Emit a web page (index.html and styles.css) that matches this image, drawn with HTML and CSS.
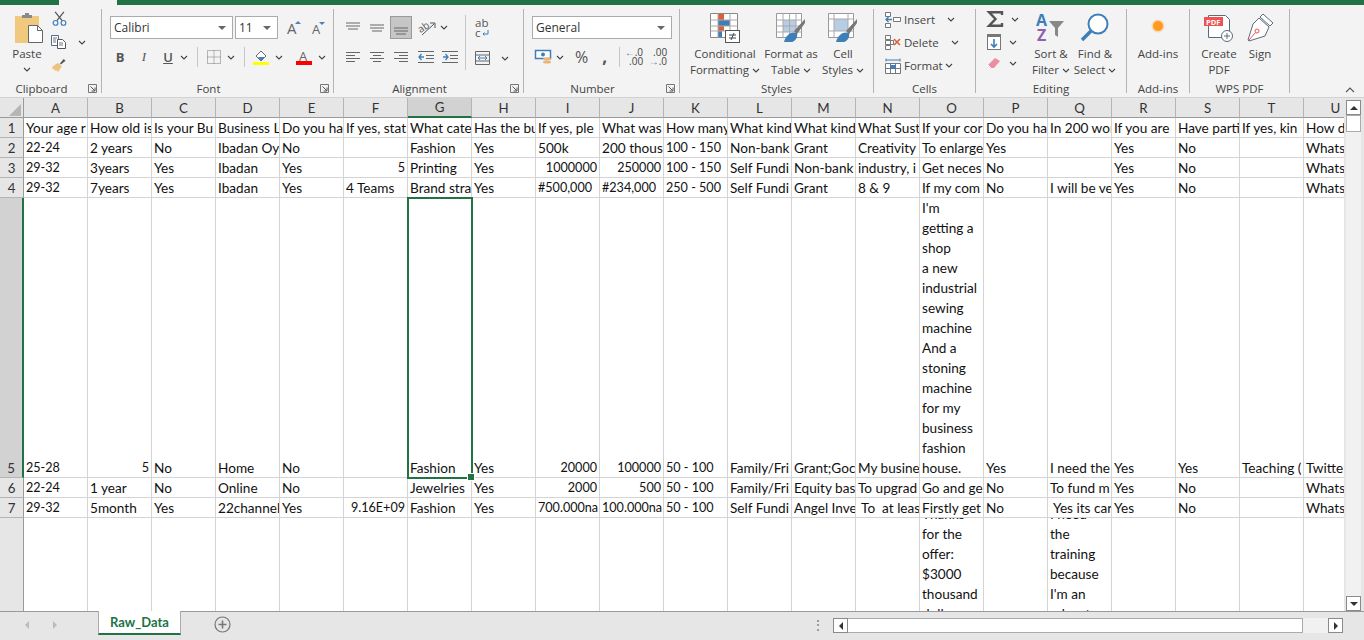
FILE: index.html
```html
<!DOCTYPE html>
<html lang="en">
  <head>
    <meta charset="UTF-8" />
    <title>Raw_Data - Excel</title>
    <link rel="stylesheet" href="styles.css">
  </head>
  <body>
    <svg class="defs" width="0" height="0">
      <symbol id="chev" viewBox="0 0 8 5"><path d="M1 1l3 3 3-3" fill="none" stroke="#444" stroke-width="1.1"/></symbol>
      <symbol id="launch" viewBox="0 0 9 9"><path d="M.5 8.5v-8h8v8z" fill="none" stroke="#777"/><path d="M2.5 2.5l4 4M7 3.5V7H3.5" fill="none" stroke="#555"/></symbol>
      <symbol id="top" viewBox="0 0 14 14"><path d="M0 2h14M0 5h14M2 8h10" stroke="#666" fill="none"/></symbol>
      <symbol id="mid" viewBox="0 0 14 14"><path d="M0 4h14M0 7h14M2 10h10" stroke="#666" fill="none"/></symbol>
      <symbol id="bot" viewBox="0 0 14 14"><path d="M0 7h14M0 10h14M2 13h10" stroke="#666" fill="none"/></symbol>
      <symbol id="left" viewBox="0 0 14 12"><path d="M0 1.5h14M0 4.5h9M0 7.5h14M0 10.5h9" stroke="#666" fill="none"/></symbol>
      <symbol id="center" viewBox="0 0 14 12"><path d="M0 1.5h14M3 4.5h8M0 7.5h14M3 10.5h8" stroke="#666" fill="none"/></symbol>
      <symbol id="right" viewBox="0 0 14 12"><path d="M0 1.5h14M5 4.5h9M0 7.5h14M5 10.5h9" stroke="#666" fill="none"/></symbol>
    </svg>

    <div class="titlebar"><span class="titlebar-tab"></span></div>

    <!-- Ribbon -->
    <div class="ribbon">
      <section class="group g-clipboard">
        <div class="body">
          <div class="big paste">
            <svg width="30" height="30" viewBox="0 0 30 30"><rect x="1" y="3" width="24" height="27" fill="#f0c97e"/><path d="M8 5V2h3V0h4v2h3v3z" fill="#8a8a8a"/><path d="M14.500 12.500h9l5 5v12h-14z" fill="#fff" stroke="#666"/><path d="M23.500 12.500v5h5" fill="none" stroke="#666"/></svg>
            <span class="paste-label">Paste</span>
            <svg class="chev paste-chev"><use href="#chev"/></svg>
          </div>
          <div class="clip-tools">
            <svg width="15" height="15" viewBox="0 0 16 17"><path d="M3 1l8 10M13 1L5 11" stroke="#555" stroke-width="1.400"/><circle cx="3.500" cy="13.500" r="2.700" fill="none" stroke="#3f7fb8" stroke-width="1.300"/><circle cx="12.500" cy="13.500" r="2.700" fill="none" stroke="#3f7fb8" stroke-width="1.300"/></svg>
            <span class="copy-row">
              <svg width="16" height="14" viewBox="0 0 16 14"><path d="M.5.500h7v10h-7z" fill="#fff" stroke="#4d6f91"/><path d="M6.500 4.500h5l3 3v6h-8z" fill="#fff" stroke="#555"/><path d="M2 3h4M2 5h3M2 7h3M8 8h4M8 10h4" stroke="#777"/></svg>
              <svg class="chev copy-chev"><use href="#chev"/></svg>
            </span>
            <svg width="16" height="14" viewBox="0 0 16 15"><path d="M9 6l4-5 2 2-5 4z" fill="#555"/><path d="M1 9l6-4 4 4-4 6-2-2-1 1-1-2-2 0z" fill="#ecc27c"/></svg>
          </div>
        </div>
        <div class="label with-launch">Clipboard<svg class="launch"><use href="#launch"/></svg></div>
      </section>

      <section class="group g-font">
        <div class="stack">
          <div class="row row-a">
            <span class="combo font-name">Calibri<i class="caret"></i></span>
            <span class="combo font-size">11<i class="caret"></i></span>
            <svg class="grow" width="14" height="15" viewBox="0 0 14 15"><text x="0" y="14" class="ico-a">A</text><path d="M8 4l3-3 3 3z" fill="#4a80b8"/></svg>
            <svg class="shrink" width="13" height="14" viewBox="0 0 13 14"><text x="0" y="13" class="ico-a small">A</text><path d="M7 1h6l-3 3z" fill="#4a80b8"/></svg>
          </div>
          <div class="row row-b font-tools">
            <b class="glyph g-b">B</b>
            <i class="glyph g-i">I</i>
            <u class="glyph g-u">U</u>
            <svg class="chev"><use href="#chev"/></svg>
            <span class="vsep sep-a"></span>
            <svg class="border-ico" width="14" height="14" viewBox="0 0 14 14"><path d="M.5.500h13v13H.5zM7 .5v13M.5 7h13" fill="none" stroke="#777" stroke-dasharray="1 1"/></svg>
            <svg class="chev"><use href="#chev"/></svg>
            <span class="vsep sep-b"></span>
            <svg class="fill-ico" width="16" height="16" viewBox="0 0 16 16"><path d="M3 7l5-5 5 5-5 5z" fill="#fff" stroke="#666"/><path d="M5 8h7l-4 4z" fill="#4a80b8"/><rect y="13" width="16" height="3" fill="#ff0"/></svg>
            <svg class="chev"><use href="#chev"/></svg>
            <svg class="color-ico" width="16" height="16" viewBox="0 0 16 16"><text x="3" y="12" class="ico-a small">A</text><rect y="12" width="16" height="4" fill="#f00"/></svg>
            <svg class="chev"><use href="#chev"/></svg>
          </div>
        </div>
        <div class="label with-launch">Font<svg class="launch"><use href="#launch"/></svg></div>
      </section>

      <section class="group g-align">
        <div class="align-wrap">
          <div class="stack">
            <div class="row row-a">
              <svg class="a-ico" width="14" height="14"><use href="#top"/></svg>
              <svg class="a-ico" width="14" height="14"><use href="#mid"/></svg>
              <span class="on"><svg width="14" height="14"><use href="#bot"/></svg></span>
              <svg class="orient" width="18" height="16" viewBox="0 0 18 16"><text x="0" y="11" class="ico-ab" transform="rotate(-35 5 8)">ab</text><path d="M4 15L16 4M12 3h5v5" fill="none" stroke="#555"/></svg>
              <svg class="chev"><use href="#chev"/></svg>
            </div>
            <div class="row row-b">
              <svg class="a-ico" width="14" height="12"><use href="#left"/></svg>
              <svg class="a-ico" width="14" height="12"><use href="#center"/></svg>
              <svg class="a-ico" width="14" height="12"><use href="#right"/></svg>
              <svg class="a-ind" width="16" height="12" viewBox="0 0 16 12"><path d="M0 .5h16M8 4.500h8M8 7.500h8M0 11.500h16" stroke="#666"/><path d="M6 6H1M3.500 3L1 6l2.500 3" fill="none" stroke="#3f7fb8" stroke-width="1.300"/></svg>
              <svg class="a-ind2" width="16" height="12" viewBox="0 0 16 12"><path d="M0 .5h16M8 4.500h8M8 7.500h8M0 11.500h16" stroke="#666"/><path d="M1 6h5M3.500 3L6 6 3.500 9" fill="none" stroke="#3f7fb8" stroke-width="1.300"/></svg>
            </div>
          </div>
          <span class="vsep sep-c"></span>
          <div class="stack wrap-col">
            <svg class="wrap-ico" width="14" height="19" viewBox="0 0 14 19"><text x="0" y="8" class="ico-wrap">ab</text><text x="0" y="18" class="ico-wrap">c</text><path d="M13 11v4H8M9.500 13.500L8 15l1.500 1.500" fill="none" stroke="#3f7fb8"/></svg>
            <span class="merge-row">
              <svg width="15" height="14" viewBox="0 0 15 14"><path d="M.5.500h14v13H.5zM.5 4h14M.5 10h14" fill="none" stroke="#666"/><path d="M3 7h9M5 5L3 7l2 2M10 5l2 2-2 2" fill="none" stroke="#3f7fb8"/></svg>
              <svg class="chev"><use href="#chev"/></svg>
            </span>
          </div>
        </div>
        <div class="label with-launch">Alignment<svg class="launch"><use href="#launch"/></svg></div>
      </section>

      <section class="group g-number">
        <div class="stack">
          <div class="row row-a"><span class="combo num-format">General<i class="caret"></i></span></div>
          <div class="row row-b num-tools">
            <svg class="cur-ico" width="17" height="16" viewBox="0 0 17 16"><rect x=".5" y="1.500" width="15" height="8" fill="#fff" stroke="#3f7fb8" stroke-width="1.500"/><circle cx="8" cy="5.500" r="2" fill="#3f7fb8"/><ellipse cx="12" cy="10" rx="4" ry="1.500" fill="#eab676"/><ellipse cx="12" cy="13" rx="4" ry="1.500" fill="#eab676"/></svg>
            <svg class="chev"><use href="#chev"/></svg>
            <span class="pct">%</span>
            <span class="comma">,</span>
            <span class="vsep sep-d"></span>
            <span class="dec"><span><em>&#8592;</em>.0</span><span>.00</span></span>
            <span class="dec dec2"><span>.00</span><span><em>&#8594;</em>.0</span></span>
          </div>
        </div>
        <div class="label with-launch">Number<svg class="launch"><use href="#launch"/></svg></div>
      </section>

      <section class="group g-styles">
        <div class="body">
          <div class="big w-cf">
            <svg width="30" height="30" viewBox="0 0 30 30"><path d="M.5.500h27v24H.5z" fill="#fff" stroke="#888"/><path d="M8 1h6v6H8z" fill="#d9603b"/><path d="M8 7h12v6H8z" fill="#3f7fb8"/><path d="M8 13h6v5H8z" fill="#d9603b"/><path d="M8 18h4v6H8z" fill="#3f7fb8"/><path d="M.5 7h27M.5 13h27M.5 18h27M8 .5v24M20 .5v24" stroke="#aaa" fill="none"/><rect x="15.500" y="17.500" width="14" height="12" fill="#fff" stroke="#555"/><path d="M19 22h7M19 25h7M24 20l-3 7" stroke="#444" fill="none"/></svg>
            <span>Conditional</span>
            <span>Formatting <svg class="chev"><use href="#chev"/></svg></span>
          </div>
          <div class="big w-ft">
            <svg width="30" height="30" viewBox="0 0 30 30"><path d="M.5.500h25v24H.5z" fill="#fff" stroke="#999"/><path d="M7 7h13v12H7z" fill="#b8cce4"/><path d="M.5 7h25M.5 13h25M.5 19h25M7 .5v24M13.500 .5v24M20 .5v24" stroke="#aaa" fill="none"/><path d="M18 18L29 6v4L21 21z" fill="#777"/><path d="M8 29c2-8 8-11 13-9 1 3-1 8-5 9z" fill="#3f7fb8"/></svg>
            <span>Format as</span>
            <span>Table <svg class="chev"><use href="#chev"/></svg></span>
          </div>
          <div class="big w-cs">
            <svg width="30" height="30" viewBox="0 0 30 30"><path d="M.5.500h25v24H.5z" fill="#fff" stroke="#999"/><path d="M6 6h14v12H6z" fill="#b8cce4"/><path d="M.5 6h25M6 .5v24M20 .5v24M.5 18h25" stroke="#aaa" fill="none"/><path d="M18 18L29 6v4L21 21z" fill="#777"/><path d="M8 29c2-8 8-11 13-9 1 3-1 8-5 9z" fill="#3f7fb8"/></svg>
            <span>Cell</span>
            <span>Styles <svg class="chev"><use href="#chev"/></svg></span>
          </div>
        </div>
        <div class="label">Styles</div>
      </section>

      <section class="group g-cells">
        <div class="cell-tools">
          <div class="tool-row">
            <svg width="16" height="16" viewBox="0 0 16 16"><path d="M.5 .5h5v4h-5zM.5 11.500h5v4h-5zM8.500 5.500h7v4h-7z" fill="#fff" stroke="#777"/><path d="M7 7.500H1M3.500 5L1 7.500 3.500 10" fill="none" stroke="#3f7fb8" stroke-width="1.300"/></svg>
            <span>Insert</span><svg class="chev c-ins"><use href="#chev"/></svg>
          </div>
          <div class="tool-row">
            <svg width="16" height="16" viewBox="0 0 16 16"><path d="M.5 .5h5v4h-5zM.5 5.500h5v4h-5zM.5 10.500h5v4h-5zM5.500 5.500h3v4h-3z" fill="#fff" stroke="#777"/><path d="M9 4l6 6M15 4l-6 6" stroke="#d9603b" stroke-width="1.600"/></svg>
            <span>Delete</span><svg class="chev c-del"><use href="#chev"/></svg>
          </div>
          <div class="tool-row">
            <svg width="16" height="16" viewBox="0 0 16 16"><path d="M.5 5.500h15v10H.5zM5.500 5.500v10M10.500 5.500v10M.5 10.500h15" fill="#fff" stroke="#777"/><path d="M5 7h6v4H5z" fill="#3f7fb8"/><path d="M1 2h14M1 .5v3M15 .5v3" stroke="#3f7fb8"/></svg>
            <span>Format</span><svg class="chev c-fmt"><use href="#chev"/></svg>
          </div>
        </div>
        <div class="label">Cells</div>
      </section>

      <section class="group g-editing">
        <div class="body">
          <div class="edit-col">
            <span class="edit-row">
              <svg width="16" height="16" viewBox="0 0 16 16"><path d="M15 4V1.200H2l6.500 6.800L2 14.800h13V12" fill="none" stroke="#555" stroke-width="2.400"/></svg>
              <svg class="chev"><use href="#chev"/></svg>
            </span>
            <span class="edit-row">
              <svg width="14" height="16" viewBox="0 0 14 16"><rect x=".5" y=".5" width="13" height="15" fill="#fff" stroke="#777"/><rect width="14" height="3" fill="#777"/><path d="M7 5v8M4 10l3 3 3-3" fill="none" stroke="#3f7fb8" stroke-width="1.600"/></svg>
              <svg class="chev"><use href="#chev"/></svg>
            </span>
            <span class="edit-row">
              <svg width="14" height="13" viewBox="0 0 14 13"><path d="M1 8l7-7 5 3-6 7H3z" fill="#eb8ea0"/><path d="M1 8l3 3" stroke="#fff"/></svg>
              <svg class="chev"><use href="#chev"/></svg>
            </span>
          </div>
          <div class="big w-sort">
            <svg width="30" height="30" viewBox="0 0 30 30"><text x="0" y="13" class="ico-az az-a">A</text><text x="1" y="28" class="ico-az az-z">Z</text><path d="M13 8h15l-6 7v9l-3-2v-7z" fill="#888"/></svg>
            <span>Sort &amp;</span>
            <span>Filter <svg class="chev"><use href="#chev"/></svg></span>
          </div>
          <div class="big w-find">
            <svg width="30" height="30" viewBox="0 0 30 30"><circle cx="18" cy="11" r="9.500" fill="#fff" stroke="#3f7fb8" stroke-width="2"/><path d="M11 18L2 27" stroke="#3f7fb8" stroke-width="3.500"/></svg>
            <span>Find &amp;</span>
            <span>Select <svg class="chev"><use href="#chev"/></svg></span>
          </div>
        </div>
        <div class="label">Editing</div>
      </section>

      <section class="group g-addins">
        <div class="body">
          <div class="big w-add">
            <svg width="30" height="30" viewBox="0 0 30 30"><circle cx="15" cy="13" r="5" fill="#ff9a1f"/><circle cx="15" cy="13" r="6.500" fill="#ff9a1f" opacity=".3"/></svg>
            <span>Add-ins</span>
          </div>
        </div>
        <div class="label">Add-ins</div>
      </section>

      <section class="group g-wps">
        <div class="body">
          <div class="big w-pdf">
            <svg width="30" height="30" viewBox="0 0 30 30"><path d="M4.500 2.500h17l4 4v18h-21z" fill="#fff" stroke="#5b6b7d"/><rect y="4" width="19" height="9" fill="#ee5253"/><text x="2" y="12" class="ico-pdf">PDF</text><circle cx="23" cy="23" r="5.500" fill="#fff" stroke="#5b6b7d"/><path d="M20 23h6M23 20v6" stroke="#5b6b7d"/></svg>
            <span>Create</span>
            <span>PDF</span>
          </div>
          <div class="big w-sign">
            <svg width="30" height="30" viewBox="0 0 30 30"><path d="M18 1l10 9-3 3-10-9z" fill="#fff" stroke="#5b6b7d"/><path d="M14 5l10 9-4 9-16 5-1-1 5-16z" fill="#fff" stroke="#5b6b7d"/><circle cx="12" cy="18" r="2" fill="none" stroke="#ee5253"/><path d="M10.500 19.500L4 27" stroke="#ee5253"/></svg>
            <span>Sign</span>
          </div>
        </div>
        <div class="label">WPS PDF</div>
      </section>

      <svg class="collapse" width="10" height="6" viewBox="0 0 10 6"><path d="M1 5l4-4 4 4" fill="none" stroke="#555" stroke-width="1.100"/></svg>
    </div>

    <!-- Sheet -->
    <div class="sheet">
      <div class="grid">
        <table>
          <thead>
            <tr>
              <th class="corner"><svg width="12" height="12" viewBox="0 0 12 12"><path d="M12 0v12H0z" fill="#b5b5b5"/></svg></th>
              <th>A</th><th>B</th><th>C</th><th>D</th><th>E</th><th>F</th><th class="active">G</th><th>H</th><th>I</th><th>J</th><th>K</th><th>L</th><th>M</th><th>N</th><th>O</th><th>P</th><th>Q</th><th>R</th><th>S</th><th>T</th><th>U</th>
            </tr>
          </thead>
          <tbody>
            <tr>
              <th>1</th><td>Your age r</td><td>How old is</td><td>Is your Bu</td><td>Business L</td><td>Do you ha</td><td>If yes, stat</td><td>What cate</td><td>Has the bu</td><td>If yes, ple</td><td>What was</td><td>How many</td><td>What kind</td><td>What kind</td><td>What Sust</td><td>If your cor</td><td>Do you ha</td><td>In 200 wor</td><td>If you are</td><td>Have parti</td><td>If yes, kin</td><td>How d</td>
            </tr>
            <tr>
              <th>2</th><td class="n">22-24</td><td>2 years</td><td>No</td><td>Ibadan Oy</td><td>No</td><td></td><td>Fashion</td><td>Yes</td><td>500k</td><td>200 thous</td><td class="n">100 - 150</td><td>Non-bank</td><td>Grant</td><td>Creativity</td><td>To enlarge</td><td>Yes</td><td></td><td>Yes</td><td>No</td><td></td><td>Whats</td>
            </tr>
            <tr>
              <th>3</th><td class="n">29-32</td><td>3years</td><td>Yes</td><td>Ibadan</td><td>Yes</td><td class="r n">5</td><td>Printing</td><td>Yes</td><td class="r n">1000000</td><td class="r n">250000</td><td class="n">100 - 150</td><td>Self Fundi</td><td>Non-bank</td><td>industry, i</td><td>Get neces</td><td>No</td><td></td><td>Yes</td><td>No</td><td></td><td>Whats</td>
            </tr>
            <tr>
              <th>4</th><td class="n">29-32</td><td>7years</td><td>Yes</td><td>Ibadan</td><td>Yes</td><td>4 Teams</td><td>Brand stra</td><td>Yes</td><td class="n">#500,000</td><td class="n">#234,000</td><td class="n">250 - 500</td><td>Self Fundi</td><td>Grant</td><td>8 &amp; 9</td><td>If my com</td><td>No</td><td>I will be ve</td><td>Yes</td><td>No</td><td></td><td>Whats</td>
            </tr>
            <tr class="row-tall">
              <th class="active">5</th><td class="n">25-28</td><td class="r n">5</td><td>No</td><td>Home</td><td>No</td><td></td><td class="selected">Fashion</td><td>Yes</td><td class="r n">20000</td><td class="r n">100000</td><td class="n">50 - 100</td><td>Family/Fri</td><td>Grant;Goc</td><td>My busine</td><td class="wrap"><div class="wrap-tall">I'm getting a shop<br>a new industrial sewing machine<br>And a stoning machine for my business fashion house.</div></td><td>Yes</td><td>I need the</td><td>Yes</td><td>Yes</td><td>Teaching (</td><td>Twitte</td>
            </tr>
            <tr>
              <th>6</th><td class="n">22-24</td><td>1 year</td><td>No</td><td>Online</td><td>No</td><td></td><td>Jewelries</td><td>Yes</td><td class="r n">2000</td><td class="r n">500</td><td class="n">50 - 100</td><td>Family/Fri</td><td>Equity bas</td><td>To upgrad</td><td>Go and ge</td><td>No</td><td>To fund m</td><td>Yes</td><td>No</td><td></td><td>Whats</td>
            </tr>
            <tr>
              <th>7</th><td class="n">29-32</td><td>5month</td><td>Yes</td><td>22channel</td><td>Yes</td><td class="r n">9.16E+09</td><td>Fashion</td><td>Yes</td><td class="n">700.000na</td><td class="n">100.000na</td><td class="n">50 - 100</td><td>Self Fundi</td><td>Angel Inve</td><td>&nbsp;To &nbsp;at leas</td><td>Firstly get</td><td>No</td><td>&nbsp;Yes its car</td><td>Yes</td><td>No</td><td></td><td>Whats</td>
            </tr>
            <tr class="row-last">
              <th></th><td></td><td></td><td></td><td></td><td></td><td></td><td></td><td></td><td></td><td></td><td></td><td></td><td></td><td></td><td class="wrap"><div class="wrap-last"><p>Thanks<br>for the offer: $3000 thousand dollars</p></div></td><td></td><td class="wrap"><div class="wrap-last"><p>I need<br>the training because I'm an educator</p></div></td><td></td><td></td><td></td><td></td>
            </tr>
          </tbody>
        </table>
      </div>
      <div class="vscroll">
        <span class="sb-btn"><i class="tri-up"></i></span>
        <span class="sb-thumb"></span>
        <span class="sb-track"></span>
        <span class="sb-btn"><i class="tri-down"></i></span>
      </div>
    </div>

    <!-- Sheet tabs -->
    <div class="tabbar">
      <div class="tab-nav"><i class="tri-left"></i><i class="tri-right"></i></div>
      <div class="tab">Raw_Data</div>
      <svg class="add-sheet" width="17" height="17" viewBox="0 0 17 17"><circle cx="8.500" cy="8.500" r="7.500" fill="none" stroke="#777" stroke-width="1.200"/><path d="M4.500 8.500h8M8.500 4.500v8" stroke="#777" stroke-width="1.600"/></svg>
      <span class="dots">&#8942;</span>
      <div class="hscroll">
        <span class="sb-btn"><i class="tri-left dark"></i></span>
        <span class="h-thumb"></span>
        <span class="h-track"></span>
        <span class="sb-btn"><i class="tri-right dark"></i></span>
      </div>
    </div>
  </body>
</html>
```

FILE: styles.css
```css
* {
  box-sizing: border-box;
}
html,
body {
  margin: 0;
  height: 640px;
  overflow: hidden;
}
body {
  width: 1364px;
  font-family: "Open Sans", "Noto Sans", sans-serif;
  font-size: 11.5px;
  color: #444;
  background-color: #e6e6e6;
}
svg {
  display: block;
  flex: none;
  overflow: visible;
}
.defs {
  position: absolute;
}

/* top strip */
.titlebar {
  height: 5px;
  background-color: #217346;
}
.titlebar-tab {
  display: block;
  width: 58px;
  height: 5px;
  margin-left: 59px;
  background-color: #f3f3f3;
}

/* ribbon */
.ribbon {
  position: relative;
  display: flex;
  height: 93px;
  padding-top: 4px;
  background-color: #f3f3f3;
  border-bottom: 1px solid #d2d2d2;
}
.group {
  position: relative;
  display: flex;
  flex-direction: column;
  flex: none;
  height: 84px;
  border-right: 1px solid #b4b4b4;
}
.g-clipboard { width: 102px; }
.g-font { width: 232px; padding-left: 8px; }
.g-align { width: 190px; padding-left: 12px; }
.g-number { width: 156px; padding-left: 8px; }
.g-styles { width: 194px; padding-left: 10px; }
.g-cells { width: 102px; }
.g-editing { width: 151px; }
.g-addins { width: 63px; }
.g-wps { width: 100px; }
.body {
  display: flex;
  flex: 1 1 0;
  min-height: 0;
  padding-top: 4px;
}
.label {
  flex: none;
  height: 14px;
  margin-bottom: -3px;
  line-height: 14px;
  text-align: center;
}
.g-font .label { margin-left: -8px; }
.g-align .label { margin-left: -12px; }
.g-number .label { margin-left: -8px; }
.g-styles .label { margin-left: -10px; }
.label.with-launch {
  padding-right: 18px;
}
.launch {
  position: absolute;
  right: 4px;
  bottom: 0;
  width: 9px;
  height: 9px;
}
.chev {
  display: inline-block;
  width: 8px;
  height: 5px;
  vertical-align: middle;
}
.vsep {
  flex: none;
  width: 1px;
  background-color: #c6c6c6;
}

/* big buttons */
.big {
  display: flex;
  flex-direction: column;
  align-items: center;
  flex: none;
  line-height: 16px;
  white-space: nowrap;
}
.big > svg:first-child {
  margin-bottom: 3px;
}
.w-cf { width: 70px; }
.w-ft { width: 62px; }
.w-cs { width: 42px; }
.w-sort { width: 44px; margin-left: 6px; }
.w-find { width: 44px; }
.w-add { width: 62px; }
.w-pdf { width: 46px; margin-left: 6px; }
.w-sign { width: 36px; }

/* clipboard */
.paste {
  width: 30px;
  margin-left: 14px;
}
.paste-label {
  margin-left: -4px;
}
.paste-chev {
  margin: 5px 0 0 -4px;
}
.clip-tools {
  display: flex;
  flex-direction: column;
  gap: 9px;
  margin: -2px 0 0 7px;
}
.clip-tools > svg:first-child {
  margin-left: 1px;
}
.copy-row {
  display: flex;
  align-items: center;
  gap: 11px;
}

/* small tool rows */
.stack {
  display: flex;
  flex: 1 1 0;
  min-height: 0;
  flex-direction: column;
  padding-top: 7px;
}
.row {
  display: flex;
  align-items: center;
}
.row-a {
  height: 23px;
}
.row-b {
  height: 22px;
  margin-top: 7px;
}
.combo {
  position: relative;
  display: block;
  height: 23px;
  padding-left: 3px;
  line-height: 21px;
  font-size: 12px;
  color: #333;
  background-color: #fff;
  border: 1px solid #ababab;
}
.caret {
  position: absolute;
  top: 9px;
  right: 6px;
  border-top: 4px solid #666;
  border-left: 4px solid transparent;
  border-right: 4px solid transparent;
}
.font-name { width: 123px; }
.font-size { width: 43px; margin-left: 2px; }
.grow { margin-left: 9px; }
.shrink { margin-left: 11px; }
.num-format { width: 140px; }
.ico-a {
  font: 15px "Open Sans", sans-serif;
  fill: #666;
}
.ico-a.small {
  font-size: 13px;
}
.ico-ab {
  font: 10px "Open Sans", sans-serif;
  fill: #555;
}
.ico-wrap {
  font: 11.500px "Open Sans", sans-serif;
  fill: #555;
}
.ico-az {
  font: bold 16px "Open Sans", sans-serif;
}
.az-a { fill: #3f7fb8; }
.az-z { fill: #8e5fb0; }
.ico-pdf {
  font: bold 7.500px "Open Sans", sans-serif;
  fill: #fff;
}

/* font tools */
.glyph {
  flex: none;
  width: 12px;
  font-family: "Liberation Serif", serif;
  font-size: 13px;
  text-align: center;
  color: #555;
}
.g-b {
  margin-left: 4px;
  font-family: "Open Sans", sans-serif;
}
.g-i { margin-left: 12px; }
.g-u {
  margin-left: 12px;
  font-family: "Open Sans", sans-serif;
  font-weight: 600;
}
.font-tools .chev { margin-left: 6px; }
.font-tools .vsep { height: 20px; }
.sep-a { margin-left: 9px; }
.border-ico { margin-left: 9px; }
.sep-b { margin-left: 9px; }
.fill-ico { margin-left: 8px; }
.color-ico { margin-left: 13px; }

/* alignment */
.align-wrap {
  display: flex;
  flex: 1 1 0;
  min-height: 0;
}
.a-ico {
  margin-right: 10px;
}
.on {
  display: flex;
  align-items: center;
  justify-content: center;
  width: 22px;
  height: 23px;
  margin: 0 6px 0 -4px;
  background-color: #c6c6c6;
  border: 1px solid #9a9a9a;
}
.orient { margin-right: 2px; }
.row-a .chev { margin-left: 2px; }
.a-ind { margin-right: 8px; }
.a-ind2 { margin-right: 0; }
.sep-c {
  height: 55px;
  margin: 6px 0 0 -1px;
}
.g-align .stack:first-child {
  flex: none;
  width: 120px;
}
.wrap-col {
  padding-left: 9px;
}
.wrap-ico { margin-top: 3px; }
.merge-row {
  display: flex;
  align-items: center;
  gap: 11px;
  margin-top: 13px;
}

/* number */
.cur-ico { margin-left: 3px; }
.num-tools .chev { margin-left: 4px; }
.pct {
  margin-left: 11px;
  font-size: 16px;
  color: #555;
}
.comma {
  margin-left: 14px;
  font-size: 17px;
  line-height: 14px;
  font-weight: 700;
  color: #555;
}
.sep-d {
  height: 20px;
  margin-left: 12px;
}
.dec {
  display: flex;
  flex-direction: column;
  align-items: flex-end;
  width: 16px;
  margin-left: 7px;
  font-size: 10px;
  line-height: 9px;
  color: #444;
}
.dec2 { margin-left: 8px; }
.dec em {
  font-style: normal;
  color: #3f7fb8;
}

/* cells and editing */
.cell-tools {
  flex: 1 1 0;
  min-height: 0;
  margin-top: -1px;
  padding-left: 11px;
}
.tool-row {
  display: flex;
  align-items: center;
  gap: 3px;
  height: 23px;
}
.c-ins { margin-left: 9px; }
.c-del { margin-left: 9px; }
.c-fmt { margin-left: -1px; }
.edit-col {
  display: flex;
  flex-direction: column;
  gap: 7px;
  margin-top: -2px;
  padding-left: 11px;
}
.edit-row {
  display: flex;
  align-items: center;
  gap: 8px;
  width: 36px;
}
.collapse {
  position: absolute;
  right: 9px;
  bottom: 4px;
}

/* sheet */
.sheet {
  display: flex;
  height: 513px;
}
.grid {
  width: 1344px;
  overflow: hidden;
  background-color: #fff;
}
table {
  width: 1368px;
  table-layout: fixed;
  border-collapse: separate;
  border-spacing: 0;
  font-family: Lato, "Liberation Sans", sans-serif;
  font-size: 13.600px;
  color: #111;
}
tr {
  height: 20px;
}
th {
  width: 64px;
  padding: 0;
  font-weight: 400;
  font-size: 13.300px;
  color: #333;
  background-color: #e6e6e6;
  border-right: 1px solid #b4b4b4;
  border-bottom: 1px solid #b4b4b4;
}
th:first-child {
  width: 24px;
  border-right-color: #9a9a9a;
}
thead th {
  border-bottom-color: #9a9a9a;
}
tbody th {
  padding-top: 1px;
  line-height: 17px;
}
th.active {
  background-color: #d2d2d2;
}
thead th.active {
  border-bottom: 2px solid #217346;
}
tbody th.active {
  border-right: 2px solid #217346;
}
.corner svg {
  margin: 5px 0 0 9px;
}
td {
  padding: 0 2px;
  overflow: hidden;
  white-space: nowrap;
  vertical-align: bottom;
  line-height: 18px;
  border-right: 1px solid #d4d4d4;
  border-bottom: 1px solid #d4d4d4;
}
td.r {
  text-align: right;
}
td.n {
  font-size: 12.600px;
}
td.wrap {
  white-space: normal;
  line-height: 20px;
  vertical-align: top;
}
.row-tall {
  height: 280px;
}
.row-tall th {
  vertical-align: bottom;
}
.wrap-tall {
  height: 279px;
  overflow: hidden;
}
.row-last {
  height: 100px;
}
.wrap-last {
  height: 99px;
  overflow: hidden;
}
.wrap-last p {
  margin: -14px 0 0;
}
td.selected {
  position: relative;
  outline: 2px solid #217346;
  outline-offset: -1px;
  overflow: visible;
}
td.selected::after {
  content: "";
  position: absolute;
  right: -4px;
  bottom: -4px;
  width: 6px;
  height: 6px;
  background-color: #217346;
  border: 1px solid #fff;
}

/* scrollbars */
.vscroll {
  display: flex;
  flex-direction: column;
  width: 20px;
  padding: 2px 3px 0 2px;
  background-color: #e6e6e6;
}
.sb-btn {
  display: flex;
  align-items: center;
  justify-content: center;
  flex: none;
  width: 15px;
  height: 15px;
  background-color: #fff;
  border: 1px solid #8a8a8a;
}
.sb-thumb {
  flex: none;
  height: 17px;
  background-color: #fff;
  border: 1px solid #ababab;
}
.sb-track {
  flex: 1;
  background-color: #f1f1f1;
}
.tri-up,
.tri-down {
  border-left: 4px solid transparent;
  border-right: 4px solid transparent;
}
.tri-up { border-bottom: 4px solid #333; }
.tri-down { border-top: 4px solid #333; }
.tri-left,
.tri-right {
  display: block;
  border-top: 4px solid transparent;
  border-bottom: 4px solid transparent;
}
.tri-left { border-right: 4px solid #bbb; }
.tri-right { border-left: 4px solid #bbb; }
.tri-left.dark { border-right-color: #333; }
.tri-right.dark { border-left-color: #333; }

/* sheet tabs */
.tabbar {
  display: flex;
  align-items: flex-start;
  height: 29px;
  background-color: #e6e6e6;
  border-top: 1px solid #9a9a9a;
}
.tab-nav {
  display: flex;
  gap: 24px;
  width: 98px;
  padding: 9px 0 0 25px;
}
.tab {
  width: 83px;
  height: 24px;
  margin-top: -1px;
  line-height: 23px;
  font-family: Lato, "Open Sans", sans-serif;
  font-size: 13px;
  font-weight: 700;
  text-align: center;
  color: #217346;
  background-color: #fff;
  border-left: 1px solid #ababab;
  border-right: 1px solid #ababab;
  border-bottom: 2px solid #217346;
}
.add-sheet {
  margin: 4px 0 0 33px;
}
.dots {
  margin: 4px 0 0 581px;
  color: #777;
  font-size: 12px;
}
.hscroll {
  display: flex;
  width: 510px;
  height: 15px;
  margin: 6px 0 0 9px;
}
.h-thumb {
  width: 455px;
  background-color: #fff;
  border: 1px solid #ababab;
  border-left: 0;
}
.h-track {
  width: 25px;
  background-color: #f1f1f1;
}
```
